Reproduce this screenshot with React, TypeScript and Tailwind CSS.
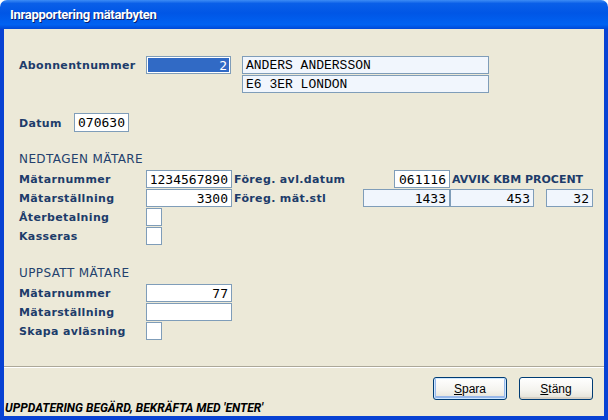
import React from "react";

const label = "h-[18px] text-[11px] font-bold text-[#1d3c6a] leading-[20px] whitespace-nowrap tracking-[0.35px]";
const box = "h-[18px] border border-[#7f9db9] font-['DejaVu_Sans_Mono',monospace] text-[13px] leading-[17px] text-black";

const NumBox = ({ w, value = "", ro = false }: { w: string; value?: string; ro?: boolean }) => (
  <div className={`${box} ${w} ${ro ? "bg-[#f1f6fd]" : "bg-white"} text-right pr-[3px]`}>{value}</div>
);

const Check = () => <div className="w-[16px] h-[18px] border border-[#7f9db9] bg-white" />;

const XpButton = ({ children, def = false }: { children: React.ReactNode; def?: boolean }) => (
  <button
    className={`w-[74px] h-[23px] rounded-[3px] border border-[#003c74] bg-[linear-gradient(to_bottom,#ffffff_0%,#f4f3ee_60%,#e3e1d6_100%)] text-[12px] text-black font-['Liberation_Sans',sans-serif] ${
      def ? "shadow-[inset_0_0_0_1px_#cee7ff,inset_0_-1px_0_2px_#98b8ea]" : "shadow-[inset_0_-2px_0_0_#d6d0c5]"
    }`}
  >
    {children}
  </button>
);

export default function App() {
  return (
    <div className="w-[608px] h-[420px] bg-white font-['DejaVu_Sans',sans-serif]">
      <div className="flex flex-col h-full rounded-t-[7px] overflow-hidden">
        {/* title bar */}
        <div className="h-[29px] flex items-center pl-[10px] bg-[linear-gradient(to_bottom,#3d8cf5_0%,#0a5fe8_12%,#0056e6_45%,#0062f2_85%,#0048d6_100%)]">
          <span className="text-white text-[13px] font-bold font-['Roboto',sans-serif] tracking-[-0.3px] [text-shadow:1px_1px_0_#0a1f6b]">
            Inrapportering mätarbyten
          </span>
        </div>

        <div className="flex-1 flex flex-col bg-[#0842d3] px-[4px] pb-[4px]">
          <div className="flex-1 flex flex-col bg-[#ece9d8]">
            <div className="flex-1 pl-[15px] pt-[27px]">
              {/* abonnent */}
              <div className="flex items-start">
                <div className={`${label} w-[127px]`}>Abonnentnummer</div>
                <div className="w-[85px] h-[18px] border border-[#7f9db9] bg-white p-[1px]">
                  <div className="h-full bg-[#316ac5] text-white text-right pr-[2px] font-['DejaVu_Sans_Mono',monospace] text-[13px] leading-[15px]">2</div>
                </div>
                <div className="ml-[11px] flex flex-col gap-[1px]">
                  <div className={`${box} w-[247px] bg-[#f1f6fd] pl-[3px] font-['Liberation_Mono',monospace]`}>ANDERS ANDERSSON</div>
                  <div className={`${box} w-[247px] bg-[#f1f6fd] pl-[3px] font-['Liberation_Mono',monospace]`}>E6 3ER LONDON</div>
                </div>
              </div>

              {/* datum */}
              <div className="flex items-center mt-[20px] h-[19px]">
                <div className={`${label} w-[55px]`}>Datum</div>
                <div className={`${box} h-[19px] w-[55px] bg-white text-left pl-[3px]`}>070630</div>
              </div>

              {/* nedtagen */}
              <div className="mt-[19px] h-[16px] leading-[16px] text-[12px] tracking-[0.4px] text-[#23416d]">NEDTAGEN MÄTARE</div>
              <div className="mt-[3px] flex flex-col gap-[1px]">
                <div className="flex items-center">
                  <div className={`${label} w-[127px]`}>Mätarnummer</div>
                  <NumBox w="w-[86px]" value="1234567890" />
                  <div className={`${label} w-[162px] pl-[2px]`}>Föreg. avl.datum</div>
                  <NumBox w="w-[56px]" value="061116" />
                  <div className={`${label} pl-[2px] tracking-[0px]`}>AVVIK KBM PROCENT</div>
                </div>
                <div className="flex items-center">
                  <div className={`${label} w-[127px]`}>Mätarställning</div>
                  <NumBox w="w-[86px]" value="3300" />
                  <div className={`${label} w-[131px] pl-[2px]`}>Föreg. mät.stl</div>
                  <NumBox w="w-[87px]" value="1433" ro />
                  <NumBox w="w-[84px]" value="453" ro />
                  <div className="ml-[12px]">
                    <NumBox w="w-[47px]" value="32" ro />
                  </div>
                </div>
                <div className="flex items-center">
                  <div className={`${label} w-[127px]`}>Återbetalning</div>
                  <Check />
                </div>
                <div className="flex items-center">
                  <div className={`${label} w-[127px]`}>Kasseras</div>
                  <Check />
                </div>
              </div>

              {/* uppsatt */}
              <div className="mt-[20px] h-[16px] leading-[16px] text-[12px] tracking-[0.4px] text-[#23416d]">UPPSATT MÄTARE</div>
              <div className="mt-[3px] flex flex-col gap-[1px]">
                <div className="flex items-center">
                  <div className={`${label} w-[127px]`}>Mätarnummer</div>
                  <NumBox w="w-[86px]" value="77" />
                </div>
                <div className="flex items-center">
                  <div className={`${label} w-[127px]`}>Mätarställning</div>
                  <NumBox w="w-[86px]" />
                </div>
                <div className="flex items-center">
                  <div className={`${label} w-[127px]`}>Skapa avläsning</div>
                  <Check />
                </div>
              </div>
            </div>

            {/* footer */}
            <div className="h-[2px] border-t border-[#aca899] border-b border-b-white" />
            <div className="mt-[9px] flex justify-end gap-[12px] pr-[11px]">
              <XpButton def>
                <span className="underline">S</span>para
              </XpButton>
              <XpButton>
                <span className="underline">S</span>täng
              </XpButton>
            </div>
            <div className="h-[16px] leading-[16px] pl-[1px] text-[12px] font-bold italic text-black whitespace-nowrap font-['Roboto',sans-serif]">
              UPPDATERING BEGÄRD, BEKRÄFTA MED 'ENTER'
            </div>
          </div>
        </div>
      </div>
    </div>
  );
}
